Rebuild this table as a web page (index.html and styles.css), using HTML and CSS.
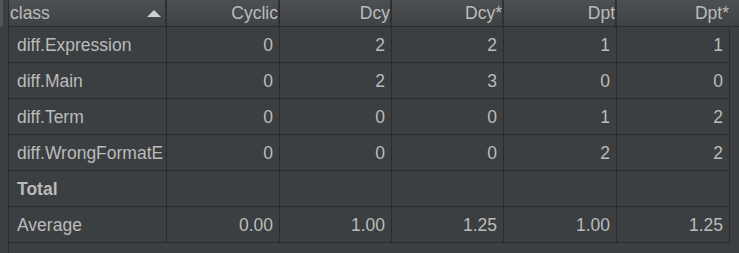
FILE: index.html
```html
<!DOCTYPE html>
<html lang="en">
  <head>
    <meta charset="UTF-8" />
    <title>Metrics</title>
    <link rel="stylesheet" href="styles.css">
  </head>
  <body>
    <div class="panel">
      <div class="gutter"><div class="tab-edge"></div></div>
      <div class="table">
        <div class="head">
          <div class="th th-left">class <span class="sort-up"></span></div>
          <div class="th">Cyclic</div>
          <div class="th">Dcy</div>
          <div class="th">Dcy*</div>
          <div class="th">Dpt</div>
          <div class="th th-last">Dpt*</div>
        </div>

        <div class="rows">
          <div class="td td-name">diff.Expression</div>
          <div class="td">0</div><div class="td">2</div><div class="td">2</div><div class="td">1</div><div class="td">1</div>

          <div class="td td-name">diff.Main</div>
          <div class="td">0</div><div class="td">2</div><div class="td">3</div><div class="td">0</div><div class="td">0</div>

          <div class="td td-name">diff.Term</div>
          <div class="td">0</div><div class="td">0</div><div class="td">0</div><div class="td">1</div><div class="td">2</div>

          <div class="td td-name">diff.WrongFormatE</div>
          <div class="td">0</div><div class="td">0</div><div class="td">0</div><div class="td">2</div><div class="td">2</div>

          <div class="td td-name total">Total</div>
          <div class="td"></div><div class="td"></div><div class="td"></div><div class="td"></div><div class="td"></div>

          <div class="td td-name">Average</div>
          <div class="td">0.00</div><div class="td">1.00</div><div class="td">1.25</div><div class="td">1.00</div><div class="td">1.25</div>
        </div>
      </div>
    </div>
  </body>
</html>
```

FILE: styles.css
```css
body {
  margin: 0;
  background-color: #3c3f41;
  font-family: "Liberation Sans", Arial, sans-serif;
  font-size: 17.5px;
  color: #bbbbbb;
}
.panel {
  display: flex;
  height: 253px;
  width: 739px;
  overflow: hidden;
}
.gutter {
  width: 8px;
  flex-shrink: 0;
}
.tab-edge {
  width: 3px;
  height: 27px;
  background-color: #515456;
  border-bottom-right-radius: 3px;
}
.table {
  flex: 1;
  border-left: 1px solid #2b2b2b;
}
.head {
  display: grid;
  grid-template-columns: 158px 113px 112px 112px 113px 1fr;
  height: 26px;
  border-bottom: 1px solid #2b2b2b;
  background: linear-gradient(#4d5052, #3f4244);
}
.th {
  display: flex;
  align-items: center;
  justify-content: flex-end;
  padding-right: 0;
  border-right: 2px solid #2e3032;
  line-height: 26px;
  white-space: nowrap;
  overflow: hidden;
}
.th-left {
  justify-content: space-between;
  padding-left: 1px;
  padding-right: 4px;
}
.th-last {
  border-right: none;
  padding-right: 10px;
}
.sort-up {
  width: 0;
  height: 0;
  border-left: 7px solid transparent;
  border-right: 7px solid transparent;
  border-bottom: 7px solid #d0d0d0;
  margin-top: 1px;
}
.rows {
  display: grid;
  grid-template-columns: 158px 113px 112px 112px 113px 113px;
  grid-auto-rows: 36px;
  width: 721px;
}
.td {
  border-right: 1px solid #2b2b2b;
  border-bottom: 1px solid #2b2b2b;
  text-align: right;
  padding-right: 6px;
  padding-top: 2px;
  line-height: 33px;
  white-space: nowrap;
  overflow: hidden;
}
.td-name {
  text-align: left;
  padding-left: 8px;
  padding-right: 0;
}
.total {
  font-weight: bold;
}
```
